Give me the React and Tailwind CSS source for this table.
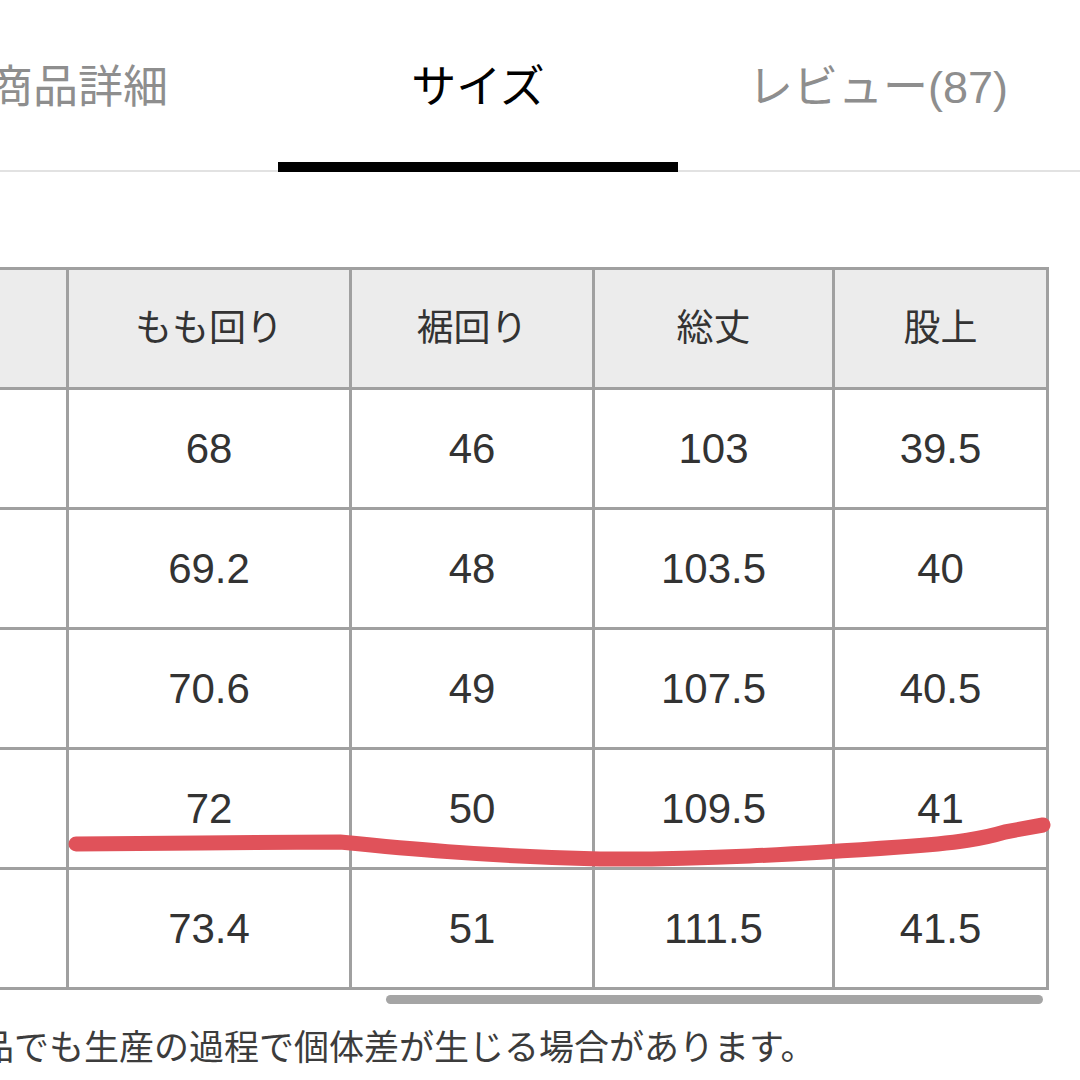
import React from "react";

const FONT = { fontFamily: '"Liberation Sans", "Noto Sans CJK JP", sans-serif' };

const headers = ["サイズ", "もも回り", "裾回り", "総丈", "股上"];
const rows = [
  ["S", "68", "46", "103", "39.5"],
  ["M", "69.2", "48", "103.5", "40"],
  ["L", "70.6", "49", "107.5", "40.5"],
  ["XL", "72", "50", "109.5", "41"],
  ["XXL", "73.4", "51", "111.5", "41.5"],
];

export default function App() {
  return (
    <div className="relative w-[1080px] h-[1080px] overflow-hidden bg-white" style={FONT}>
      {/* Tabs */}
      <div className="flex ml-[-122px] w-[1324px] border-b-[2px] border-[#e2e2e2]">
        <div className="w-[400px] h-[170px] flex items-center justify-center pt-[6px] text-[45px] text-[#8e8e8e]">
          商品詳細
        </div>
        <div className="relative w-[400px] h-[170px] flex items-center justify-center pt-[6px] text-[45px] text-black">
          サイズ
          <div className="absolute left-0 right-0 bottom-[-2px] h-[10px] bg-black" />
        </div>
        <div className="w-[400px] h-[170px] flex items-center justify-center pt-[6px] text-[45px] text-[#8e8e8e]">
          レビュー(87)
        </div>
      </div>

      {/* Table */}
      <div className="mt-[95px] ml-[-203px] w-fit grid grid-cols-[266px_280px_240px_237px_211px] gap-[3px] p-[3px] bg-[#a0a0a0]">
        {headers.map((h, i) => (
          <div
            key={"h" + i}
            className="h-[117px] flex items-center justify-center bg-[#ececec] text-[37px] text-[#333]"
          >
            {h}
          </div>
        ))}
        {rows.map((r, ri) =>
          r.map((c, ci) => (
            <div
              key={ri + "-" + ci}
              className="h-[117px] flex items-center justify-center bg-white text-[42px] text-[#333]"
            >
              {c}
            </div>
          ))
        )}
      </div>

      {/* Scrollbar */}
      <div className="mt-[5px] ml-[386px] w-[657px] h-[9px] rounded-full bg-[#a5a5a5]" />

      {/* Note */}
      <div className="mt-[22px] ml-[-126px] whitespace-nowrap text-[35px] leading-[44px] text-[#3c3c3c]">
        同じ商品でも生産の過程で個体差が生じる場合があります。
      </div>

      {/* Red hand-drawn line */}
      <svg
        className="absolute inset-0 pointer-events-none"
        width="1080"
        height="1080"
        viewBox="0 0 1080 1080"
      >
        <path
          d="M 76 844 L 200 843 L 340 842 C 400 848, 480 856, 600 859 C 700 860, 800 854, 900 847 C 960 843, 985 838, 1005 832 L 1043 825"
          fill="none"
          stroke="#e0525a"
          strokeWidth="15"
          strokeLinecap="round"
          strokeLinejoin="round"
        />
      </svg>
    </div>
  );
}
